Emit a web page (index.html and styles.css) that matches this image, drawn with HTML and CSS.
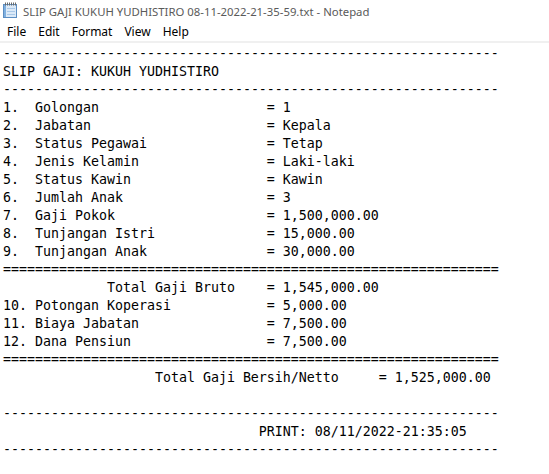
FILE: index.html
```html
<!DOCTYPE html>
<html>
<head>
<meta charset="utf-8">
<link rel="stylesheet" href="styles.css">
</head>
<body>
<div class="window">
  <div class="titlebar">
    <svg class="app-icon" width="16" height="16" viewBox="0 0 16 16">
      <rect x="1.5" y="2.5" width="13" height="13" fill="#dbe9f7" stroke="#5b8dc2"/>
      <rect x="2" y="3" width="2" height="12" fill="#7fb0e0"/>
      <line x1="5" y1="6.5" x2="13" y2="6.5" stroke="#a9c8e8"/>
      <line x1="5" y1="9.5" x2="13" y2="9.5" stroke="#a9c8e8"/>
      <line x1="5" y1="12.5" x2="13" y2="12.5" stroke="#a9c8e8"/>
      <g stroke="#6b6b6b" stroke-width="1">
        <line x1="3.5" y1="0.5" x2="3.5" y2="3.5"/>
        <line x1="5.5" y1="0.5" x2="5.5" y2="3.5"/>
        <line x1="7.5" y1="0.5" x2="7.5" y2="3.5"/>
        <line x1="9.5" y1="0.5" x2="9.5" y2="3.5"/>
        <line x1="11.5" y1="0.5" x2="11.5" y2="3.5"/>
        <line x1="13.5" y1="0.5" x2="13.5" y2="3.5"/>
      </g>
    </svg>
    <span class="title">SLIP GAJI KUKUH YUDHISTIRO 08-11-2022-21-35-59.txt - Notepad</span>
  </div>
  <div class="menubar">
    <span class="menu-item">File</span>
    <span class="menu-item">Edit</span>
    <span class="menu-item">Format</span>
    <span class="menu-item">View</span>
    <span class="menu-item">Help</span>
  </div>
  <div class="editor">
    <div class="line">--------------------------------------------------------------</div>
    <div class="line">SLIP GAJI: KUKUH YUDHISTIRO</div>
    <div class="line">--------------------------------------------------------------</div>
    <div class="line"><span class="key">1.  Golongan</span>= 1</div>
    <div class="line"><span class="key">2.  Jabatan</span>= Kepala</div>
    <div class="line"><span class="key">3.  Status Pegawai</span>= Tetap</div>
    <div class="line"><span class="key">4.  Jenis Kelamin</span>= Laki-laki</div>
    <div class="line"><span class="key">5.  Status Kawin</span>= Kawin</div>
    <div class="line"><span class="key">6.  Jumlah Anak</span>= 3</div>
    <div class="line"><span class="key">7.  Gaji Pokok</span>= 1,500,000.00</div>
    <div class="line"><span class="key">8.  Tunjangan Istri</span>= 15,000.00</div>
    <div class="line"><span class="key">9.  Tunjangan Anak</span>= 30,000.00</div>
    <div class="line">==============================================================</div>
    <div class="line"><span class="key key-bruto">Total Gaji Bruto</span>= 1,545,000.00</div>
    <div class="line"><span class="key">10. Potongan Koperasi</span>= 5,000.00</div>
    <div class="line"><span class="key">11. Biaya Jabatan</span>= 7,500.00</div>
    <div class="line"><span class="key">12. Dana Pensiun</span>= 7,500.00</div>
    <div class="line">==============================================================</div>
    <div class="line"><span class="key key-netto">Total Gaji Bersih/Netto</span>= 1,525,000.00</div>
    <div class="line"> </div>
    <div class="line">--------------------------------------------------------------</div>
    <div class="line"><span class="print">PRINT: 08/11/2022-21:35:05</span></div>
    <div class="line">--------------------------------------------------------------</div>
  </div>
</div>
</body>
</html>
```

FILE: styles.css
```css
html, body {
  margin: 0;
  padding: 0;
  background: #ffffff;
}

.window {
  width: 549px;
  height: 474px;
  overflow: hidden;
  background: #ffffff;
  font-family: "Noto Sans", "Liberation Sans", sans-serif;
}

.titlebar {
  height: 22px;
  display: flex;
  align-items: center;
  padding-left: 2px;
  gap: 5px;
}

.app-icon {
  flex: none;
  margin-top: -2px;
}

.title {
  font-size: 11.35px;
  color: #5a5a5a;
  white-space: nowrap;
}

.menubar {
  height: 19px;
  display: flex;
  align-items: center;
  padding-left: 1px;
  border-bottom: 2px solid #f0f0f0;
}

.menu-item {
  font-size: 12px;
  color: #000000;
  padding: 0 6px;
}

.editor {
  padding: 2px 3px 0;
  font-family: "DejaVu Sans Mono", monospace;
  font-size: 13.29px;
  line-height: 18px;
  color: #000000;
}

.line {
  height: 18px;
  white-space: pre;
}

.key {
  display: inline-block;
  width: 33ch;
}

.key-bruto {
  width: 20ch;
  padding-left: 13ch;
}

.key-netto {
  width: 28ch;
  padding-left: 19ch;
}

.print {
  padding-left: 32ch;
}
```
